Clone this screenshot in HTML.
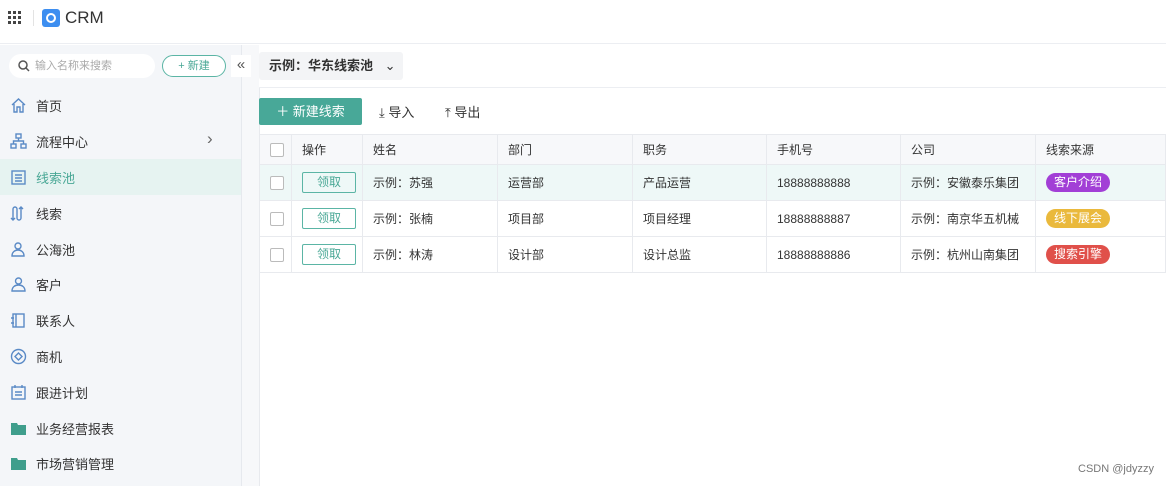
<!DOCTYPE html>
<html><head><meta charset="utf-8"><style>
*{box-sizing:border-box;margin:0;padding:0}
body{width:1166px;height:486px;overflow:hidden;background:#fff;font-family:"Liberation Sans","Noto Sans CJK SC",sans-serif;font-size:13px;color:#333;position:relative}
.top{position:absolute;left:0;top:0;width:1166px;height:44px;background:#fff;border-bottom:1px solid #eceef2}
.side{position:absolute;left:0;top:45px;width:242px;height:441px;background:#f4f6f9;border-right:1px solid #e6e9ee}
.gap{position:absolute;left:242px;top:45px;width:17px;height:441px;background:#f7f8fa}
.main{position:absolute;left:259px;top:88px;width:907px;height:398px;background:#fff;border-left:1px solid #e8eaee}
.sbar{position:absolute;left:259px;top:45px;width:907px;height:43px;background:#fff;border-bottom:1px solid #eceef2}
.nav{position:absolute;left:10px;font-size:13px;color:#333;display:flex;align-items:center}
.nav svg{width:17px;height:17px;margin-right:9px}
table{border-collapse:collapse;position:absolute;left:259px;top:134px;width:907px}
td,th{border:1px solid #e8eaee;height:36px;font-weight:normal;text-align:left;padding-left:10px;font-size:12px;color:#333}
th{height:30px;background:#f7f8fa}
.cb{width:14px;height:14px;border:1px solid #bbb;border-radius:2px;background:#fff;display:inline-block;vertical-align:middle}
.lq{display:inline-block;width:54px;height:21px;border:1px solid #5bb5a5;border-radius:2px;text-align:center;line-height:19px;color:#4aa896;font-size:12px}
.tag{display:inline-block;padding:0 8px;height:19px;line-height:19px;border-radius:10px;color:#fff;font-size:12px}
</style></head><body>
<div class="top">
 <svg style="position:absolute;left:8px;top:11px" width="14" height="14"><g fill="#444"><rect x="0" y="0" width="3" height="3"/><rect x="5" y="0" width="3" height="3"/><rect x="10" y="0" width="3" height="3"/><rect x="0" y="5" width="3" height="3"/><rect x="5" y="5" width="3" height="3"/><rect x="10" y="5" width="3" height="3"/><rect x="0" y="10" width="3" height="3"/><rect x="5" y="10" width="3" height="3"/><rect x="10" y="10" width="3" height="3"/></g></svg>
 <div style="position:absolute;left:33px;top:10px;width:1px;height:16px;background:#e3e3e3"></div>
 <div style="position:absolute;left:42px;top:9px;width:18px;height:18px;background:#3d8ef0;border-radius:3px"><div style="position:absolute;left:4px;top:4px;width:10px;height:10px;border:2px solid #fff;border-radius:50%"></div></div>
 <div style="position:absolute;left:65px;top:8px;font-size:17px;color:#333">CRM</div>
</div>
<div class="side">
 <div style="position:absolute;left:9px;top:9px;width:146px;height:24px;background:#fff;border-radius:12px;font-size:11px;color:#aaa;line-height:24px;padding-left:26px">输入名称来搜索
  <svg style="position:absolute;left:9px;top:6px" width="12" height="12"><circle cx="5" cy="5" r="4" fill="none" stroke="#555" stroke-width="1.5"/><path d="M8 8l3 3" stroke="#555" stroke-width="1.5"/></svg></div>
 <div style="position:absolute;left:162px;top:10px;width:64px;height:22px;border:1px solid #5bb5a5;border-radius:11px;background:#fff;color:#4aa896;font-size:11px;text-align:center;line-height:20px">+ 新建</div>
 <div style="position:absolute;left:0;top:114px;width:241px;height:36px;background:#e6f3f1"></div>
</div>
<div class="gap"></div>
<div class="sbar"><div style="position:absolute;left:0;top:7px;width:144px;height:28px;background:#f3f4f6;border-radius:3px;font-size:13px;font-weight:bold;line-height:28px;padding-left:10px;color:#333">示例：华东线索池 <span style="font-weight:normal;margin-left:8px">⌄</span></div></div>
<div style="position:absolute;left:231px;top:55px;width:20px;height:22px;background:#fff;font-size:15px;text-align:center;line-height:20px;color:#555">«</div>
<div class="main"></div>
<div class="nav" style="top:96px"><svg viewBox="0 0 17 17"><path d="M2 8L8.5 2 15 8M4 7v8h3v-5h3v5h3V7" fill="none" stroke="#5a8ac6" stroke-width="1.4"/></svg>首页</div>
<div class="nav" style="top:132px"><svg viewBox="0 0 17 17"><g fill="none" stroke="#5a8ac6" stroke-width="1.4"><rect x="6" y="1" width="5" height="4"/><rect x="1" y="11" width="5" height="4"/><rect x="11" y="11" width="5" height="4"/><path d="M8.5 5v3M3.5 11V8h10v3"/></g></svg>流程中心</div>
<div style="position:absolute;left:207px;top:129px;font-size:17px;color:#666">›</div>
<div class="nav" style="top:168px;color:#4aa896"><svg viewBox="0 0 17 17"><g fill="none" stroke="#5a8ac6" stroke-width="1.4"><rect x="2" y="2" width="13" height="13"/><path d="M5 6h7M5 9h7M5 12h7"/></g></svg>线索池</div>
<div class="nav" style="top:204px"><svg viewBox="0 0 17 17"><path d="M3 15V4a2 2 0 0 1 4 0v9a2 2 0 0 0 4 0V2m-2 2l2-2 2 2M1 13l2 2 2-2" fill="none" stroke="#5a8ac6" stroke-width="1.4"/></svg>线索</div>
<div class="nav" style="top:240px"><svg viewBox="0 0 17 17"><g fill="none" stroke="#5a8ac6" stroke-width="1.4"><circle cx="8" cy="5" r="3"/><path d="M2 15c0-4 3-6 6-6s6 2 6 6z"/></g></svg>公海池</div>
<div class="nav" style="top:275px"><svg viewBox="0 0 17 17"><g fill="none" stroke="#5a8ac6" stroke-width="1.4"><circle cx="8.5" cy="5" r="3"/><path d="M2 15c0-4 3-6 6.5-6s6.5 2 6.5 6z"/></g></svg>客户</div>
<div class="nav" style="top:311px"><svg viewBox="0 0 17 17"><g fill="none" stroke="#5a8ac6" stroke-width="1.4"><rect x="3" y="2" width="11" height="13"/><path d="M6 2v13M1 6h3M1 11h3"/></g></svg>联系人</div>
<div class="nav" style="top:347px"><svg viewBox="0 0 17 17"><g fill="none" stroke="#5a8ac6" stroke-width="1.4"><circle cx="8.5" cy="8.5" r="7"/><path d="M8.5 5l3.5 3.5-3.5 3.5-3.5-3.5z"/></g></svg>商机</div>
<div class="nav" style="top:383px"><svg viewBox="0 0 17 17"><g fill="none" stroke="#5a8ac6" stroke-width="1.4"><rect x="2" y="3" width="13" height="12"/><path d="M5 1v3M12 1v3M5 8h7M5 11h7"/></g></svg>跟进计划</div>
<div class="nav" style="top:419px"><svg viewBox="0 0 17 17"><path d="M1 3h6l1 2h8v10H1z" fill="#3f9e8c"/></svg>业务经营报表</div>
<div class="nav" style="top:454px"><svg viewBox="0 0 17 17"><path d="M1 3h6l1 2h8v10H1z" fill="#3f9e8c"/></svg>市场营销管理</div>

<div style="position:absolute;left:259px;top:98px;width:103px;height:27px;background:#48a898;border-radius:2px;color:#fff;font-size:13px;line-height:27px;text-align:center">＋ 新建线索</div>
<div style="position:absolute;left:379px;top:102px;font-size:13px;color:#333">⤓ 导入</div>
<div style="position:absolute;left:445px;top:102px;font-size:13px;color:#333">⤒ 导出</div>

<table>
<tr><th style="width:32px"><span class="cb"></span></th><th style="width:71px">操作</th><th style="width:135px">姓名</th><th style="width:135px">部门</th><th style="width:134px">职务</th><th style="width:134px">手机号</th><th style="width:135px">公司</th><th>线索来源</th></tr>
<tr style="background:#eef8f7"><td><span class="cb"></span></td><td><span class="lq">领取</span></td><td>示例：苏强</td><td>运营部</td><td>产品运营</td><td>18888888888</td><td>示例：安徽泰乐集团</td><td><span class="tag" style="background:#a23fd6">客户介绍</span></td></tr>
<tr><td><span class="cb"></span></td><td><span class="lq">领取</span></td><td>示例：张楠</td><td>项目部</td><td>项目经理</td><td>18888888887</td><td>示例：南京华五机械</td><td><span class="tag" style="background:#eab93c">线下展会</span></td></tr>
<tr><td><span class="cb"></span></td><td><span class="lq">领取</span></td><td>示例：林涛</td><td>设计部</td><td>设计总监</td><td>18888888886</td><td>示例：杭州山南集团</td><td><span class="tag" style="background:#e0504a">搜索引擎</span></td></tr>
</table>
<div style="position:absolute;left:1078px;top:463px;font-size:11px;color:#777">CSDN @jdyzzy</div>
</body></html>
